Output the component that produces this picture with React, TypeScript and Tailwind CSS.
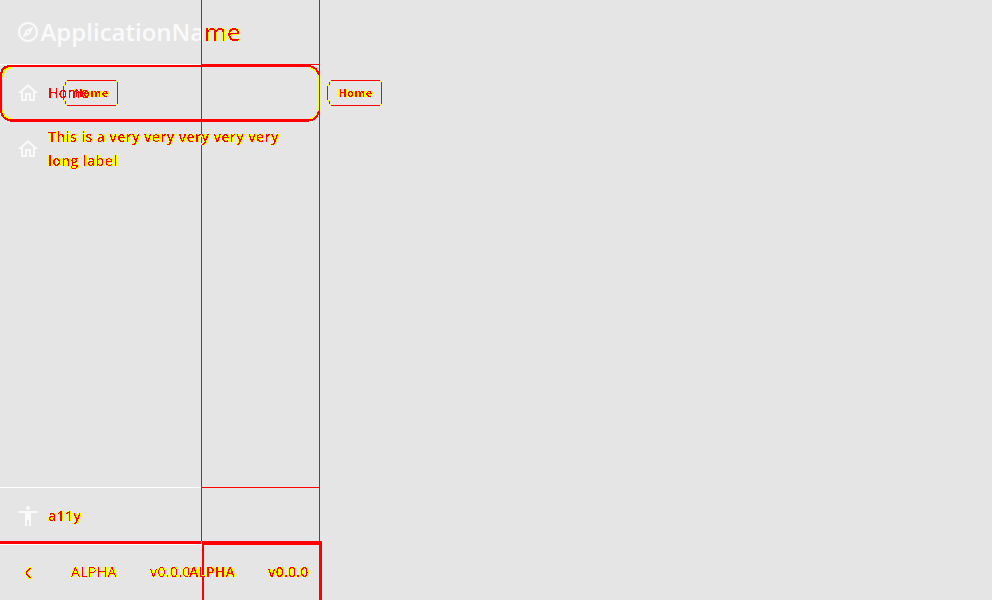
import React from "react";

function Filters() {
  return (
    <svg width="0" height="0" className="absolute" aria-hidden="true">
      <filter id="mark" x="-5%" y="-10%" width="110%" height="120%" colorInterpolationFilters="sRGB">
        <feMorphology in="SourceAlpha" operator="dilate" radius="1 0" result="grown" />
        <feComponentTransfer in="grown" result="wide">
          <feFuncA type="linear" slope="60" intercept="-24" />
        </feComponentTransfer>
        <feGaussianBlur in="SourceAlpha" stdDeviation="0.5" result="soft" />
        <feComponentTransfer in="soft" result="halo">
          <feFuncA type="linear" slope="60" intercept="-4" />
        </feComponentTransfer>
        <feMerge result="shape">
          <feMergeNode in="wide" />
          <feMergeNode in="halo" />
        </feMerge>
        <feFlood floodColor="#ffff00" />
        <feComposite in2="shape" operator="in" result="edge" />
        <feComponentTransfer in="SourceAlpha" result="core">
          <feFuncA type="discrete" tableValues="0 0 0 0 0 0 1 1 1 1" />
        </feComponentTransfer>
        <feFlood floodColor="#ff0000" />
        <feComposite in2="core" operator="in" result="fill" />
        <feMerge>
          <feMergeNode in="edge" />
          <feMergeNode in="fill" />
        </feMerge>
      </filter>
      <filter id="solid" x="-5%" y="-10%" width="110%" height="120%" colorInterpolationFilters="sRGB">
        <feComponentTransfer in="SourceAlpha" result="core">
          <feFuncA type="discrete" tableValues="0 0 0 0 1 1 1 1 1 1" />
        </feComponentTransfer>
        <feFlood floodColor="#ff0000" />
        <feComposite in2="core" operator="in" />
      </filter>
    </svg>
  );
}

function Mark({ children, className = "" }: { children: React.ReactNode; className?: string }) {
  return <span className={`inline-block whitespace-pre [filter:url(#mark)] ${className}`}>{children}</span>;
}

function Icon({ d }: { d: string }) {
  return (
    <svg viewBox="0 0 24 24" className="h-6 w-6 shrink-0 fill-[#fafafa]">
      <path d={d} />
    </svg>
  );
}

const HOME = "M12 5.69l5 4.5V18h-2v-6H9v6H7v-7.81l5-4.5M12 3L2 12h3v8h6v-6h2v6h6v-8h3L12 3z";
const A11Y = "M12 2c1.1 0 2 .9 2 2s-.9 2-2 2-2-.9-2-2 .9-2 2-2zm9 7h-6v13h-2v-6h-2v6H9V9H3V7h18v2z";
const COMPASS =
  "M12 2C6.48 2 2 6.48 2 12s4.48 10 10 10 10-4.48 10-10S17.52 2 12 2zm0 18c-4.41 0-8-3.59-8-8s3.59-8 8-8 8 3.59 8 8-3.59 8-8 8zm-5.5-2.5l7.51-3.49L17.5 6.5 9.99 9.99 6.5 17.5zm5.5-6.6c.61 0 1.1.49 1.1 1.1s-.49 1.1-1.1 1.1-1.1-.49-1.1-1.1.49-1.1 1.1-1.1z";

function Tooltip({ className }: { className: string }) {
  return (
    <div className={`absolute top-[15px] h-[26px] w-[55px] ${className}`}>
      <svg viewBox="0 0 55 26" className="absolute inset-0 h-[26px] w-[55px]" shapeRendering="crispEdges" fill="none">
        <path d="M3.5 .5H53M54.5 2V24M53 25.5H3.5M2.5 2V5M.5 6V20M2.5 21V24" stroke="#f00" />
        <path d="M3 1.5h1M53 1.5h1M53 24.5h1M3 24.5h1M1.5 4v2M1.5 20v2" stroke="#ff0" />
      </svg>
      <Mark className="absolute left-[11.5px] top-[4px] text-[11px] font-bold leading-[18px] tracking-[0.4px]">Home</Mark>
    </div>
  );
}

export default function App() {
  return (
    <div className="relative h-[600px] w-[992px] overflow-hidden bg-[#e5e5e5] font-['Open_Sans',sans-serif] text-black">
      <Filters />
      <div className="absolute left-[201px] top-0 h-[541px] w-px bg-[#f00]" />
      <div className="absolute left-[319px] top-0 h-[541px] w-px bg-[#f00]" />
      <aside className="flex h-[600px] w-80 flex-col">
        <header className="flex h-16 shrink-0 items-center pl-4">
          <Icon d={COMPASS} />
          <div className="whitespace-nowrap pl-[0.5px] text-2xl font-semibold text-[#fafafa]">
            ApplicationNa<Mark className="font-medium tracking-[0.4px]">me</Mark>
          </div>
        </header>
        <div className="flex h-px shrink-0">
          <div className="w-[202px] bg-white" />
          <div className="flex-1 bg-[#f00]" />
        </div>
        <nav className="flex flex-1 flex-col">
          <div className="relative flex h-[57px] shrink-0 items-center pb-px pl-4">
            <svg viewBox="0 0 320 57" className="absolute inset-0 h-[57px] w-80" shapeRendering="crispEdges" fill="none">
              <path d="M2.5 46V11Q3 4 11 2.5M309 2.5Q317 4 318.5 11V46Q317 53 309 54.5M11 54Q3 53 2.5 46" stroke="#ff0" strokeWidth="2" />
              <path d="M1 45V11Q1 1 11 1H309Q317 2 319 10M319 46Q317 55 309 55.5H11Q1 54 1 45" stroke="#f00" strokeWidth="2" />
              <path d="M10 55.5H309" stroke="#f00" strokeWidth="3" />
              <path d="M2.5 12V45" stroke="#e5e5e5" />
              <path d="M319.5 0V57" stroke="#f00" />
            </svg>
            <Icon d={HOME} />
            <span className="z-10 ml-2 text-sm tracking-[0.4px] [filter:url(#solid)]">Home</span>
            <Tooltip className="left-[63px]" />
            <Tooltip className="left-[327px]" />
          </div>
          <div className="flex h-[54px] shrink-0 items-center pl-4">
            <Icon d={HOME} />
            <Mark className="ml-2 text-sm font-semibold leading-6 tracking-[0.4px]">{"This is a very very very very very\nlong label"}</Mark>
          </div>
        </nav>
        <div className="flex h-px shrink-0">
          <div className="w-[202px] bg-white" />
          <div className="flex-1 bg-[#f00]" />
        </div>
        <div className="flex h-[53px] shrink-0 items-center pl-4 pt-[3px]">
          <Icon d={A11Y} />
          <Mark className="ml-2 text-sm font-semibold tracking-[0.4px]">a11y</Mark>
        </div>
        <div className="h-[3px] w-[201px] shrink-0 bg-[#f00]" />
        <footer className="relative h-14 shrink-0">
          <div className="h-px w-[202px] bg-white" />
          <div className="absolute -top-[3px] left-[202px] h-[59px] w-[120px] border-l-2 border-r-[3px] border-t-4 border-[#f00]" />
          <Mark className="absolute left-[20px] top-[16px]">
            <svg viewBox="0 0 16 24" className="h-6 w-4" fill="none" stroke="black" strokeWidth="1.5"><path d="M10.5 7.5L6 13l4.5 5.5" /></svg>
          </Mark>
          <Mark className="absolute left-[71px] top-[18px] text-sm leading-5 tracking-[0.4px]">ALPHA</Mark>
          <Mark className="absolute left-[150px] top-[18px] text-sm leading-5 tracking-[0.4px]">v0.0.0</Mark>
          <Mark className="absolute left-[189px] top-[18px] text-sm font-semibold leading-5 tracking-[0.1px]">ALPHA</Mark>
          <Mark className="absolute left-[268px] top-[18px] text-sm font-semibold leading-5 tracking-[0.2px]">v0.0.0</Mark>
        </footer>
      </aside>
    </div>
  );
}
